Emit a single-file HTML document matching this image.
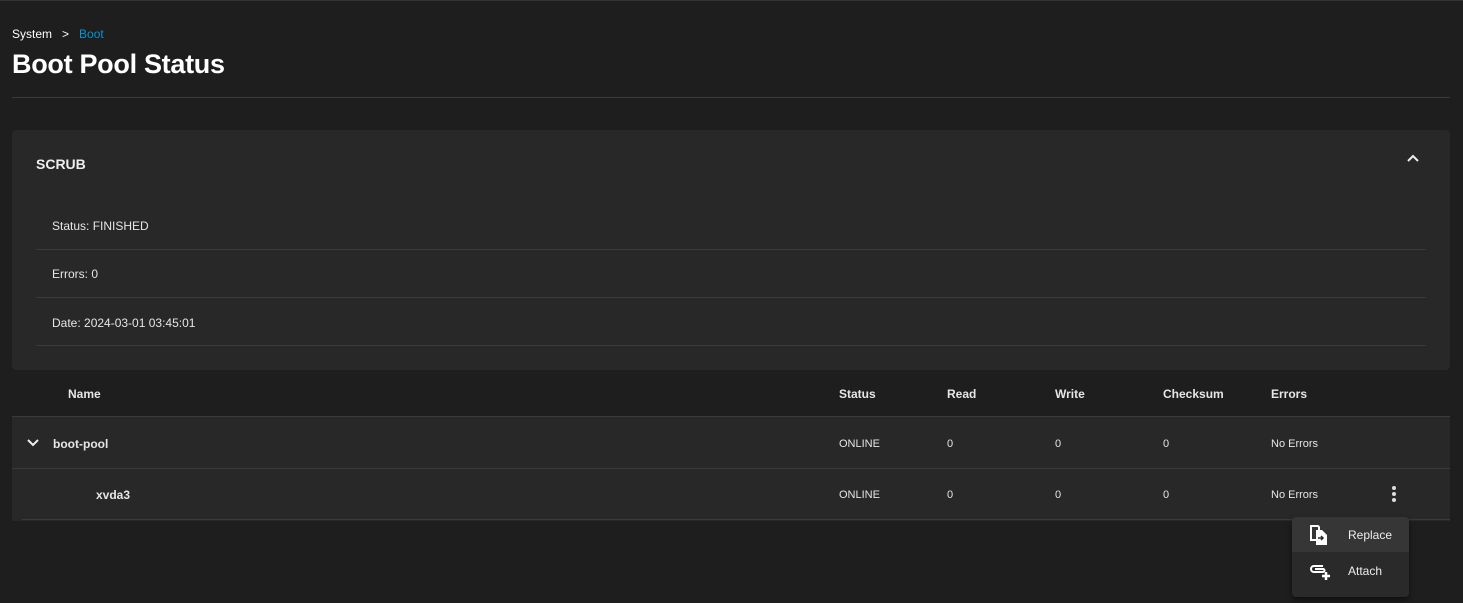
<!DOCTYPE html>
<html><head><style>
body{margin:0;width:1463px;height:603px;background:#1e1e1e;font-family:"Liberation Sans",sans-serif;color:#e6e6e6;position:relative;overflow:hidden}
.a{position:absolute}
.t{font-size:12px}
</style></head><body>
<div class="a" style="left:0;top:0;width:1463px;height:1px;background:#333"></div>
<div class="a t" style="left:12px;top:27px;color:#fff;font-size:12px">System &nbsp;&nbsp;&gt;&nbsp;&nbsp; <span style="color:#0095d5">Boot</span></div>
<div class="a" style="left:12px;top:49px;font-size:27px;font-weight:bold;color:#fff;letter-spacing:-0.3px">Boot Pool Status</div>
<div class="a" style="left:12px;top:97px;width:1438px;height:1px;background:#3a3a3a"></div>
<div class="a" style="left:12px;top:130px;width:1438px;height:240px;background:#282828;border-radius:4px"></div>
<div class="a" style="left:36px;top:156px;font-size:14px;font-weight:bold;color:#eee">SCRUB</div>
<svg class="a" style="left:1406px;top:152px" width="14" height="12" viewBox="0 0 14 12"><path d="M2 9 L7 4 L12 9" stroke="#eee" stroke-width="2" fill="none"/></svg>
<div class="a t" style="left:52px;top:219px">Status: FINISHED</div>
<div class="a" style="left:36px;top:249px;width:1390px;height:1px;background:#3a3a3a"></div>
<div class="a t" style="left:52px;top:267px">Errors: 0</div>
<div class="a" style="left:36px;top:297px;width:1390px;height:1px;background:#3a3a3a"></div>
<div class="a t" style="left:52px;top:316px">Date: 2024-03-01 03:45:01</div>
<div class="a" style="left:36px;top:345px;width:1390px;height:1px;background:#3a3a3a"></div>
<div class="a t" style="left:68px;top:387px;font-weight:bold">Name</div>
<div class="a t" style="left:839px;top:387px;font-weight:bold">Status</div>
<div class="a t" style="left:947px;top:387px;font-weight:bold">Read</div>
<div class="a t" style="left:1055px;top:387px;font-weight:bold">Write</div>
<div class="a t" style="left:1163px;top:387px;font-weight:bold">Checksum</div>
<div class="a t" style="left:1271px;top:387px;font-weight:bold">Errors</div>
<div class="a" style="left:12px;top:416px;width:1438px;height:104px;background:#282828;border-top:1px solid #3a3a3a"></div>
<div class="a" style="left:12px;top:468px;width:1438px;height:1px;background:#3a3a3a"></div>
<div class="a" style="left:22px;top:519px;width:1428px;height:1px;background:#3a3a3a"></div>
<svg class="a" style="left:26px;top:438px" width="14" height="10" viewBox="0 0 14 10"><path d="M2 2 L7 7 L12 2" stroke="#eee" stroke-width="2" fill="none"/></svg>
<div class="a t" style="left:53px;top:437px;font-weight:bold">boot-pool</div>
<div class="a" style="left:839px;top:438px;font-size:11px">ONLINE</div>
<div class="a" style="left:947px;top:438px;font-size:11px">0</div>
<div class="a" style="left:1055px;top:438px;font-size:11px">0</div>
<div class="a" style="left:1163px;top:438px;font-size:11px">0</div>
<div class="a" style="left:1271px;top:438px;font-size:11px">No Errors</div>
<div class="a t" style="left:96px;top:488px;font-weight:bold">xvda3</div>
<div class="a" style="left:839px;top:489px;font-size:11px">ONLINE</div>
<div class="a" style="left:947px;top:489px;font-size:11px">0</div>
<div class="a" style="left:1055px;top:489px;font-size:11px">0</div>
<div class="a" style="left:1163px;top:489px;font-size:11px">0</div>
<div class="a" style="left:1271px;top:489px;font-size:11px">No Errors</div>
<svg class="a" style="left:1390px;top:485px" width="8" height="18"><circle cx="4" cy="3" r="2" fill="#ddd"/><circle cx="4" cy="9" r="2" fill="#ddd"/><circle cx="4" cy="15" r="2" fill="#ddd"/></svg>
<div class="a" style="left:1292px;top:517px;width:117px;height:80px;background:#2a2a2a;border-radius:4px;box-shadow:0 3px 6px rgba(0,0,0,.5);overflow:hidden">
<div style="height:35px;background:#363636"></div>
</div>
<svg class="a" style="left:1309px;top:524px" width="22" height="22" viewBox="0 0 22 22"><path d="M2 2h7l1 1v13h-8z" fill="none" stroke="#fff" stroke-width="2"/><path d="M7 6h6l5 5v10H7z" fill="#fff"/><path d="M9 14h5M12 12l2 2-2 2" stroke="#2a2a2a" stroke-width="1.5" fill="none"/></svg>
<div class="a t" style="left:1348px;top:528px;color:#eee">Replace</div>
<svg class="a" style="left:1309px;top:562px" width="24" height="20" viewBox="0 0 24 20"><path d="M14 4H5a3 3 0 0 0 0 6h9a1.5 1.5 0 0 0 0-3H6" fill="none" stroke="#fff" stroke-width="2"/><path d="M17 10v8M13 14h8" stroke="#fff" stroke-width="2.5"/></svg>
<div class="a t" style="left:1348px;top:564px;color:#eee">Attach</div>
</body></html>
